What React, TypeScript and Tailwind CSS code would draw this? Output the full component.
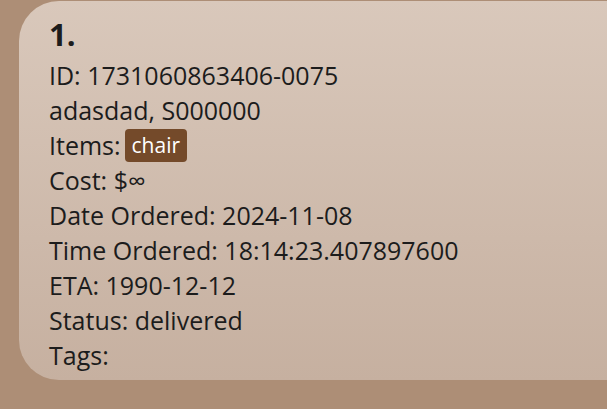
const rows = [
  'ID: 1731060863406-0075',
  'adasdad, S000000',
];

const after = [
  'Cost: $∞',
  'Date Ordered: 2024-11-08',
  'Time Ordered: 18:14:23.407897600',
  'ETA: 1990-12-12',
  'Status: delivered',
  'Tags:',
];

export default function App() {
  return (
    <main className="h-[409px] w-[607px] overflow-hidden bg-[#ad8e76] pt-px pl-[19px] font-['Open_Sans','Noto_Sans',sans-serif] text-[#1c1c1c]">
      <section className="rounded-l-[40px] bg-gradient-to-b from-[#d9c8bb] to-[#c6b0a0] pt-[13px] pb-[7px] pl-[30px]">
        <h1 className="mb-[4px] text-[31px] leading-[40px] font-bold">1.</h1>
        <div className="text-[25px] leading-[35px]">
          {rows.map((row) => (
            <p key={row}>{row}</p>
          ))}
          <p className="flex items-center gap-[4px]">
            Items:
            <span className="rounded-[4px] bg-[#744a2a] px-[7px] text-[21px] leading-[33px] text-white">chair</span>
          </p>
          {after.map((row) => (
            <p key={row}>{row}</p>
          ))}
        </div>
      </section>
    </main>
  );
}
